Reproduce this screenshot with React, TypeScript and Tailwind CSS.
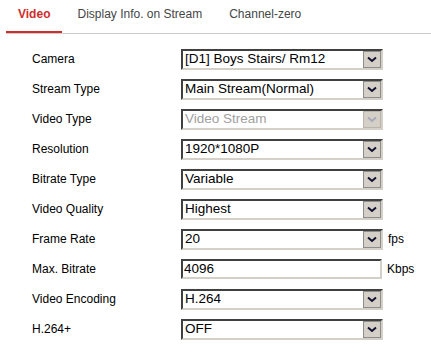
import React from 'react'

type Row = {
  label: string
  value: string
  kind?: 'select' | 'input'
  disabled?: boolean
  unit?: string
}

const ROWS: Row[] = [
  { label: 'Camera', value: '[D1] Boys Stairs/ Rm12' },
  { label: 'Stream Type', value: 'Main Stream(Normal)' },
  { label: 'Video Type', value: 'Video Stream', disabled: true },
  { label: 'Resolution', value: '1920*1080P' },
  { label: 'Bitrate Type', value: 'Variable' },
  { label: 'Video Quality', value: 'Highest' },
  { label: 'Frame Rate', value: '20', unit: 'fps' },
  { label: 'Max. Bitrate', value: '4096', kind: 'input', unit: 'Kbps' },
  { label: 'Video Encoding', value: 'H.264' },
  { label: 'H.264+', value: 'OFF' },
]

const TABS = ['Video', 'Display Info. on Stream', 'Channel-zero']

function Chevron({ disabled }: { disabled?: boolean }) {
  return (
    <svg width="10" height="7" viewBox="0 0 10 7">
      <path
        d="M1 1.5 L5 5 L9 1.5"
        fill="none"
        stroke={disabled ? '#a8a8b8' : '#101030'}
        strokeWidth="2"
      />
    </svg>
  )
}

function FakeSelect({ value, disabled }: { value: string; disabled?: boolean }) {
  return (
    <div className="flex h-[21px] w-[202px] items-center border-2 border-t-[#404040] border-l-[#404040] border-r-[#d4d0c8] border-b-[#d4d0c8] bg-white">
      <span
        className={`flex-1 truncate pl-[2px] text-[13.5px] leading-none ${
          disabled ? 'text-[#a0a0a0]' : 'text-black'
        }`}
      >
        {value}
      </span>
      <div
        className={`flex h-[17px] w-[18px] items-center justify-center border bg-[#d4d0c8] ${
          disabled ? 'border-[#b8b4ac]' : 'border-[#8c8c8c]'
        }`}
      >
        <Chevron disabled={disabled} />
      </div>
    </div>
  )
}

function FakeInput({ value }: { value: string }) {
  return (
    <div className="flex h-[20px] w-[201px] items-center border-2 border-t-[#404040] border-l-[#404040] border-r-[#d4d0c8] border-b-[#d4d0c8] bg-white">
      <span className="pl-[1px] text-[13.5px] leading-none text-black">{value}</span>
    </div>
  )
}

export default function App() {
  return (
    <div className="h-[361px] w-[431px] bg-white font-['Liberation_Sans',Arial,sans-serif]">
      {/* ── Tab bar ── */}
      <div className="ml-[6px] flex h-[34px] gap-[3px] border-b border-[#cccccc]">
        {TABS.map((t, i) => (
          <div
            key={t}
            className={`flex h-[33px] items-center px-[12px] pb-[4px] text-[12px] ${
              i === 0
                ? 'border-b-2 border-[#d12c2c] font-bold text-[#d12c2c]'
                : 'border-b-2 border-transparent text-[#454545]'
            }`}
          >
            {t}
          </div>
        ))}
      </div>

      {/* ── Form rows ── */}
      <div className="mt-[10px] pl-[32px]">
        {ROWS.map((r) => (
          <div key={r.label} className="flex h-[30px] items-center">
            <div className="w-[149px] text-[12px] text-black">{r.label}</div>
            {r.kind === 'input' ? <FakeInput value={r.value} /> : <FakeSelect value={r.value} disabled={r.disabled} />}
            {r.unit && (
              <span className={`text-[12px] text-black ${r.kind === 'input' ? 'ml-[5px]' : 'ml-[5px]'}`}>{r.unit}</span>
            )}
          </div>
        ))}
      </div>
    </div>
  )
}
